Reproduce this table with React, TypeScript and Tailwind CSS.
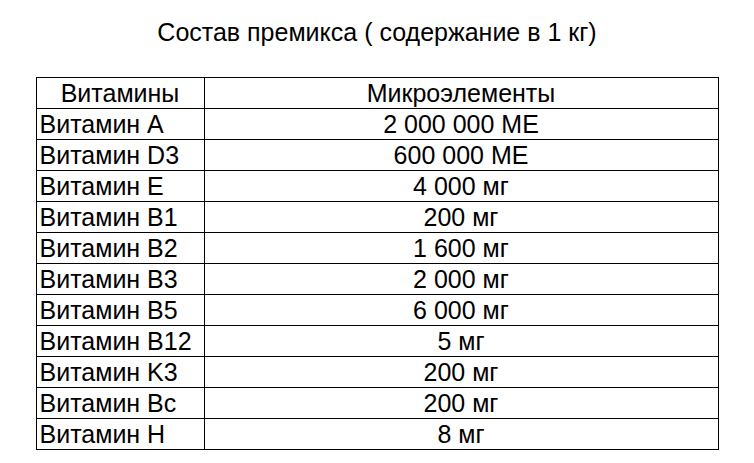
const rows: [string, string][] = [
  ["Витамин A", "2 000 000 МЕ"],
  ["Витамин D3", "600 000 МЕ"],
  ["Витамин E", "4 000 мг"],
  ["Витамин B1", "200 мг"],
  ["Витамин B2", "1 600 мг"],
  ["Витамин B3", "2 000 мг"],
  ["Витамин B5", "6 000 мг"],
  ["Витамин B12", "5 мг"],
  ["Витамин K3", "200 мг"],
  ["Витамин Bc", "200 мг"],
  ["Витамин H", "8 мг"],
];

export default function App() {
  return (
    <div className="w-[754px] h-[463px] bg-white text-black font-['Liberation_Sans',Arial,sans-serif]">
      <h1 className="pt-[17px] text-center text-[25px] leading-[30px]">
        Состав премикса ( содержание в 1 кг)
      </h1>
      <table className="mt-[30px] mx-auto border-collapse text-[25px] leading-none">
        <thead>
          <tr>
            <th className="w-[168px] h-[31px] p-0 border border-black font-normal text-center">Витамины</th>
            <th className="w-[514px] h-[31px] p-0 border border-black font-normal text-center">Микроэлементы</th>
          </tr>
        </thead>
        <tbody>
          {rows.map(([name, amount]) => (
            <tr key={name}>
              <td className="h-[31px] p-0 pl-[3px] border border-black text-left whitespace-nowrap">{name}</td>
              <td className="h-[31px] p-0 border border-black text-center">{amount}</td>
            </tr>
          ))}
        </tbody>
      </table>
    </div>
  );
}
